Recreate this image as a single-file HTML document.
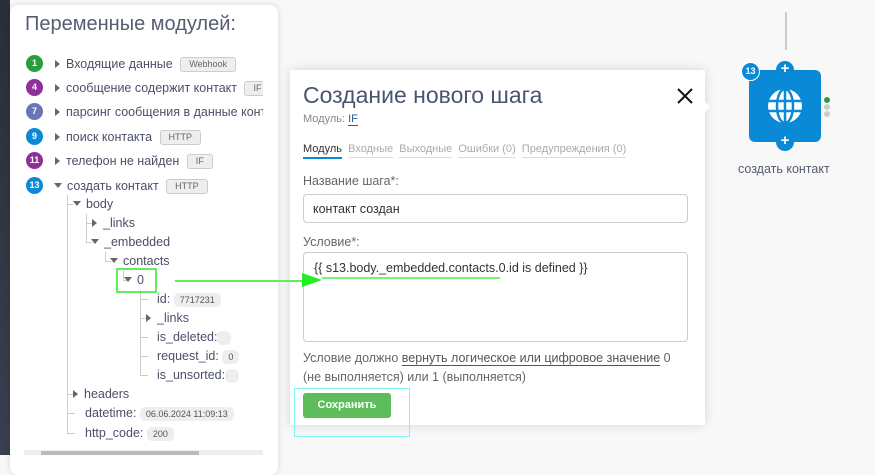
<!DOCTYPE html><html><head><meta charset="utf-8"><style>
*{box-sizing:border-box;margin:0;padding:0}
body{width:875px;height:455px;overflow:hidden;background:#f8f8f8;font-family:"Liberation Sans","Noto Sans CJK SC",sans-serif;position:relative;color:#555b6e}
.a{position:absolute;white-space:nowrap}
.lp{position:absolute;left:10px;top:5px;width:268px;height:470px;background:#fff;border-radius:8px;box-shadow:0 0 6px rgba(0,0,0,.15);overflow:hidden}
.dk{position:absolute;left:0;top:0;width:10px;height:455px;background:linear-gradient(#2a2e3a,#3a3f4e)}
.b{position:absolute;width:17px;height:17px;border-radius:50%;color:#fff;font-size:9px;font-weight:bold;text-align:center;line-height:17px}
.t{font-size:12.5px;color:#4a5068;line-height:16px}
.tag{display:inline-block;background:#eee;border:1px solid #ccc;border-radius:3px;font-size:9px;padding:0 8px;height:15px;line-height:13px;color:#666;vertical-align:middle;margin-left:4px}
.pill{display:inline-block;background:#eee;border-radius:5px;font-size:9px;padding:0 6px;height:14px;line-height:14px;color:#555;vertical-align:middle;min-width:14px}
.tri{display:inline-block;width:0;height:0;border-left:5px solid #666;border-top:4px solid transparent;border-bottom:4px solid transparent;margin-right:6px}
.trd{display:inline-block;width:0;height:0;border-top:5px solid #666;border-left:4px solid transparent;border-right:4px solid transparent;margin-right:5px;vertical-align:2px}
.vl{position:absolute;width:1px;background:#ccc}.hl{position:absolute;height:1px;background:#ccc}
.m{position:absolute;left:290px;top:70px;width:415px;height:355px;background:#fff;box-shadow:0 0 10px rgba(0,0,0,.15)}
</style></head><body>
<div class="dk"></div>
<div class="lp"></div>
<div class="a" style="left:25px;top:13px;font-size:20px;color:#555e70">Переменные модулей:</div>
<div class="b" style="left:26px;top:55px;background:#2a9d3c">1</div>
<div class="b" style="left:26px;top:79px;background:#8e2f9a">4</div>
<div class="b" style="left:26px;top:103px;background:#6a74b8">7</div>
<div class="b" style="left:26px;top:128px;background:#0a89d6">9</div>
<div class="b" style="left:26px;top:152px;background:#8e2f9a">11</div>
<div class="b" style="left:26px;top:177px;background:#0a89d6">13</div>
<div class="a t" style="left:55px;top:56px"><span class="tri"></span>Входящие данные <span class="tag">Webhook</span></div>
<div class="a t" style="left:55px;top:80px"><span class="tri"></span>сообщение содержит контакт <span class="tag">IF</span></div>
<div class="a t" style="left:55px;top:104px;width:208px;overflow:hidden"><span class="tri"></span>парсинг сообщения в данные контакта</div>
<div class="a t" style="left:55px;top:129px"><span class="tri"></span>поиск контакта <span class="tag">HTTP</span></div>
<div class="a t" style="left:55px;top:153px"><span class="tri"></span>телефон не найден <span class="tag">IF</span></div>
<div class="a t" style="left:54px;top:178px"><span class="trd"></span>создать контакт <span class="tag">HTTP</span></div>
<div style="position:absolute;left:263px;top:40px;width:15px;height:420px;background:#fff"></div>
<div class="vl" style="left:67px;top:195px;height:238px"></div>
<div class="vl" style="left:86px;top:214px;height:28px"></div>
<div class="vl" style="left:105px;top:252px;height:10px"></div>
<div class="vl" style="left:123px;top:270px;height:10px"></div>
<div class="vl" style="left:140px;top:290px;height:86px"></div>
<div class="hl" style="left:67px;top:204px;width:6px"></div>
<div class="hl" style="left:86px;top:223px;width:6px"></div>
<div class="hl" style="left:86px;top:242px;width:6px"></div>
<div class="hl" style="left:105px;top:261px;width:6px"></div>
<div class="hl" style="left:123px;top:280px;width:6px"></div>
<div class="hl" style="left:140px;top:299px;width:8px"></div>
<div class="hl" style="left:140px;top:318px;width:6px"></div>
<div class="hl" style="left:140px;top:337px;width:8px"></div>
<div class="hl" style="left:140px;top:356px;width:8px"></div>
<div class="hl" style="left:140px;top:375px;width:8px"></div>
<div class="hl" style="left:67px;top:394px;width:6px"></div>
<div class="hl" style="left:67px;top:413px;width:8px"></div>
<div class="hl" style="left:67px;top:433px;width:8px"></div>
<div class="a t" style="left:73px;top:196px"><span class="trd"></span>body</div>
<div class="a t" style="left:92px;top:215px"><span class="tri"></span>_links</div>
<div class="a t" style="left:91px;top:234px"><span class="trd"></span>_embedded</div>
<div class="a t" style="left:110px;top:253px"><span class="trd"></span>contacts</div>
<div class="a t" style="left:124px;top:272px"><span class="trd"></span>0</div>
<div class="a t" style="left:157px;top:291px">id: <span class="pill">7717231</span></div>
<div class="a t" style="left:146px;top:310px"><span class="tri"></span>_links</div>
<div class="a t" style="left:157px;top:329px">is_deleted:<span class="pill" style="padding:0">&nbsp;</span></div>
<div class="a t" style="left:157px;top:348px">request_id: <span class="pill">0</span></div>
<div class="a t" style="left:157px;top:367px">is_unsorted:<span class="pill" style="padding:0">&nbsp;</span></div>
<div class="a t" style="left:73px;top:386px"><span class="tri"></span>headers</div>
<div class="a t" style="left:85px;top:405px">datetime: <span class="pill">06.06.2024 11:09:13</span></div>
<div class="a t" style="left:85px;top:425px">http_code: <span class="pill">200</span></div>
<div style="position:absolute;left:24px;top:450px;width:239px;height:5px;background:#eee"></div>
<div style="position:absolute;left:41px;top:451px;width:158px;height:4px;background:#bbb"></div>
<div style="position:absolute;left:116px;top:268px;width:41px;height:25px;border:2px solid #5ef05a"></div>

<div class="m"></div>
<div class="a" style="left:703px;top:100px;width:0;height:0;border-left:7px solid #fff;border-top:7px solid transparent;border-bottom:7px solid transparent"></div>
<div class="a" style="left:303px;top:82px;font-size:23px;color:#4a5570">Создание нового шага</div>
<svg class="a" style="left:676px;top:87px" width="18" height="18"><path d="M2 2L16 16M16 2L2 16" stroke="#111" stroke-width="2"/></svg>
<div class="a" style="left:303px;top:113px;font-size:11px;color:#888">Модуль: <span style="color:#2a5aa0;border-bottom:1px solid #2a5aa0">IF</span></div>
<div class="a" style="left:303px;top:143px;font-size:11px;color:#aaa">
<span style="color:#333;border-bottom:2px solid #0a89d6;padding-bottom:2px">Модуль</span>&nbsp; <span style="border-bottom:1px solid #ddd;padding-bottom:2px">Входные</span>&nbsp; <span style="border-bottom:1px solid #ddd;padding-bottom:2px">Выходные</span>&nbsp; <span style="border-bottom:1px solid #ddd;padding-bottom:2px">Ошибки (0)</span>&nbsp; <span style="border-bottom:1px solid #ddd;padding-bottom:2px">Предупреждения (0)</span></div>
<div class="a" style="left:303px;top:174px;font-size:12.5px;color:#666">Название шага*:</div>
<div class="a" style="left:303px;top:194px;width:385px;height:29px;border:1px solid #ccc;border-radius:4px;font-size:12.5px;color:#333;padding:7px 9px">контакт создан</div>
<div class="a" style="left:303px;top:235px;font-size:12.5px;color:#666">Условие*:</div>
<div class="a" style="left:303px;top:252px;width:385px;height:90px;border:1px solid #ccc;border-radius:4px;font-size:12.5px;color:#333;padding:8px 10px">{{ s13.body._embedded.contacts.0.id is defined }}</div>
<div class="a" style="left:322px;top:277px;width:178px;height:2px;background:#7ef07a"></div>
<div class="a" style="left:303px;top:349px;font-size:12.5px;color:#666;line-height:19px;white-space:normal;width:372px">Условие должно <span style="border-bottom:1px solid #555;color:#555">вернуть логическое или цифровое значение</span> 0 (не выполняется) или 1 (выполняется)</div>
<div class="a" style="left:303px;top:393px;width:88px;height:25px;background:#5cbd5a;border-radius:3px;color:#fff;font-size:11px;font-weight:bold;text-align:center;line-height:25px">Сохранить</div>
<div class="a" style="left:294px;top:388px;width:116px;height:49px;border:1px solid #7ff4f4"></div>
<div class="a" style="left:175px;top:280px;width:130px;height:2px;background:#5ef05a"></div>
<div class="a" style="left:302px;top:273px;width:0;height:0;border-left:20px solid #22ee22;border-top:7px solid transparent;border-bottom:7px solid transparent"></div>

<div class="a" style="left:785px;top:12px;width:2px;height:38px;background:#ccc"></div>
<div class="a" style="left:749px;top:70px;width:72px;height:72px;background:#0a8ad6;border-radius:6px"></div>
<svg class="a" style="left:767px;top:88px" width="36" height="36" viewBox="0 0 36 36"><circle cx="18" cy="18" r="17" fill="#fff"/><g stroke="#0a8ad6" stroke-width="2.5" fill="none"><path d="M1 13H35M1 23H35M18 1V35"/><ellipse cx="18" cy="18" rx="8" ry="17"/></g></svg>
<div class="b" style="left:741px;top:62px;background:#0a8ad6;border:1.5px solid #fff;width:19px;height:19px;line-height:16px">13</div>
<div class="b" style="left:776px;top:61px;background:#0a8ad6;font-size:15px;line-height:16px;width:18px;height:18px">+</div>
<div class="b" style="left:776px;top:133px;background:#0a8ad6;font-size:15px;line-height:16px;width:18px;height:18px">+</div>
<div class="a" style="left:824px;top:97px;width:6px;height:6px;border-radius:50%;background:#2a9d3c"></div>
<div class="a" style="left:824px;top:104px;width:6px;height:6px;border-radius:50%;background:#ccc"></div>
<div class="a" style="left:824px;top:111px;width:6px;height:6px;border-radius:50%;background:#ccc"></div>
<div class="a" style="left:738px;top:162px;font-size:12.5px;color:#555b6e">создать контакт</div>
</body></html>
